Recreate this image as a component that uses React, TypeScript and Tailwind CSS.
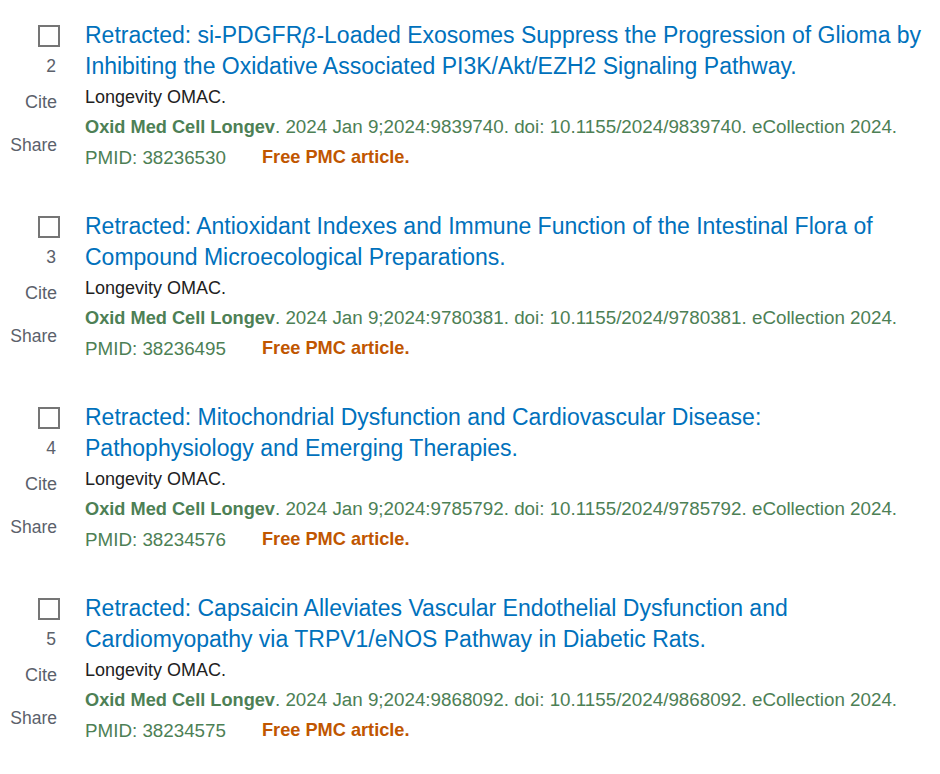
import React from "react";

type Item = {
  n: number;
  title: React.ReactNode;
  pages: string;
  pmid: string;
};

const items: Item[] = [
  {
    n: 2,
    title: (
      <>
        Retracted: si-PDGFR<i className="pr-[1px]">β</i>-Loaded Exosomes Suppress the Progression of Glioma by Inhibiting the Oxidative Associated PI3K/Akt/EZH2 Signaling Pathway.
      </>
    ),
    pages: "9839740",
    pmid: "38236530",
  },
  {
    n: 3,
    title: "Retracted: Antioxidant Indexes and Immune Function of the Intestinal Flora of Compound Microecological Preparations.",
    pages: "9780381",
    pmid: "38236495",
  },
  {
    n: 4,
    title: "Retracted: Mitochondrial Dysfunction and Cardiovascular Disease: Pathophysiology and Emerging Therapies.",
    pages: "9785792",
    pmid: "38234576",
  },
  {
    n: 5,
    title: "Retracted: Capsaicin Alleviates Vascular Endothelial Dysfunction and Cardiomyopathy via TRPV1/eNOS Pathway in Diabetic Rats.",
    pages: "9868092",
    pmid: "38234575",
  },
];

function Article({ it }: { it: Item }) {
  return (
    <div className="flex">
      <div className="w-[57px] shrink-0 flex flex-col items-end text-[#5b616b]">
        <div className="h-[31px] flex items-center">
          <div className="w-[22px] h-[22px] border-2 border-[#757575] bg-white mr-[-3px]" />
        </div>
        <div className="h-[31px] flex items-center text-[17.5px] mr-[1px]">{it.n}</div>
        <div className="h-[40px] flex items-center text-[18px]">Cite</div>
        <div className="h-[46px] flex items-center text-[17.5px]">Share</div>
      </div>
      <div className="ml-[28px] w-[840px] shrink-0">
        <div className="text-[23px] leading-[31px] text-[#0071bc]">{it.title}</div>
        <div className="text-[18px] leading-[30px] text-[#212121]">Longevity OMAC.</div>
        <div className="text-[18.8px] leading-[30px] text-[#4d8055] whitespace-nowrap">
          <span className="font-bold text-[18.2px]">Oxid Med Cell Longev</span>. 2024 Jan 9;2024:{it.pages}. doi: 10.1155/2024/{it.pages}. eCollection 2024.
        </div>
        <div className="text-[18.8px] leading-[31px] text-[#4d8055] flex">
          <span>PMID: {it.pmid}</span>
          <span className="ml-[36px] font-bold text-[18.2px] text-[#c05600]">Free PMC article.</span>
        </div>
      </div>
    </div>
  );
}

export default function App() {
  return (
    <div
      className="w-[940px] h-[774px] bg-white overflow-hidden pt-[20px] flex flex-col gap-[38px]"
      style={{ fontFamily: '"Liberation Sans", Arial, sans-serif' }}
    >
      {items.map((it) => (
        <Article key={it.n} it={it} />
      ))}
    </div>
  );
}
